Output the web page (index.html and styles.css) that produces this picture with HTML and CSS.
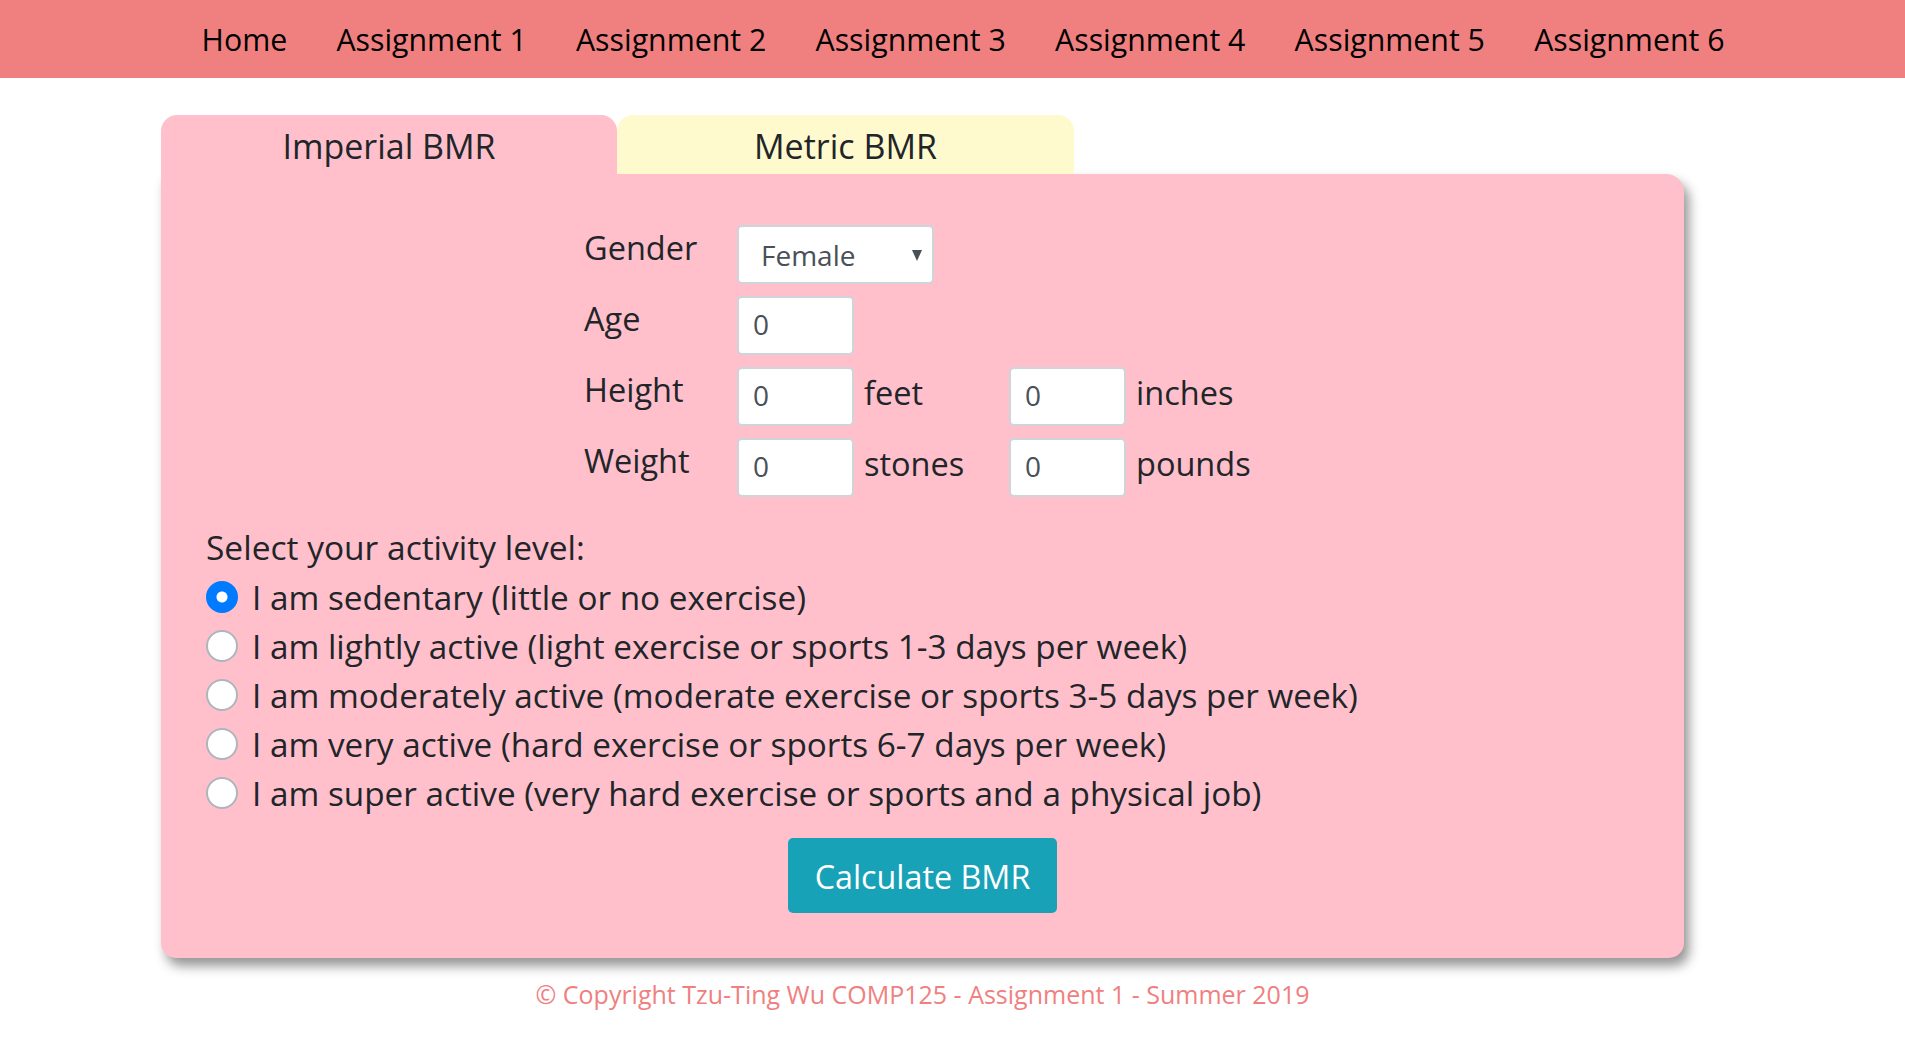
FILE: index.html
```html
<!DOCTYPE html>
<html lang="en">
<head>
<meta charset="utf-8">
<title>BMR Calculator</title>
<link rel="stylesheet" href="styles.css">
</head>
<body>
<nav class="topnav">
  <a class="nav-link" href="#">Home</a>
  <a class="nav-link" href="#">Assignment 1</a>
  <a class="nav-link" href="#">Assignment 2</a>
  <a class="nav-link" href="#">Assignment 3</a>
  <a class="nav-link" href="#">Assignment 4</a>
  <a class="nav-link" href="#">Assignment 5</a>
  <a class="nav-link" href="#">Assignment 6</a>
</nav>
<main class="page">
  <div class="tabs">
    <div class="tab tab-imperial">Imperial BMR</div>
    <div class="tab tab-metric">Metric BMR</div>
  </div>
  <section class="card">
    <div class="form-grid">
      <label class="field-label">Gender</label>
      <div class="select-wrap">
        <select class="select">
          <option>Female</option>
          <option>Male</option>
        </select>
      </div>

      <label class="field-label">Age</label>
      <input class="num-input" type="text" value="0">

      <label class="field-label">Height</label>
      <input class="num-input" type="text" value="0">
      <span class="unit">feet</span>
      <input class="num-input" type="text" value="0">
      <span class="unit">inches</span>

      <label class="field-label">Weight</label>
      <input class="num-input" type="text" value="0">
      <span class="unit">stones</span>
      <input class="num-input" type="text" value="0">
      <span class="unit">pounds</span>
    </div>

    <p class="activity-title">Select your activity level:</p>
    <div class="radios">
      <label class="radio-row"><input type="radio" name="act" class="radio" checked><span>I am sedentary (little or no exercise)</span></label>
      <label class="radio-row"><input type="radio" name="act" class="radio"><span>I am lightly active (light exercise or sports 1-3 days per week)</span></label>
      <label class="radio-row"><input type="radio" name="act" class="radio"><span>I am moderately active (moderate exercise or sports 3-5 days per week)</span></label>
      <label class="radio-row"><input type="radio" name="act" class="radio"><span>I am very active (hard exercise or sports 6-7 days per week)</span></label>
      <label class="radio-row"><input type="radio" name="act" class="radio"><span>I am super active (very hard exercise or sports and a physical job)</span></label>
    </div>
    <div class="btn-row">
      <button class="btn-calc" type="button">Calculate BMR</button>
    </div>
  </section>
  <footer class="footer">© Copyright Tzu-Ting Wu COMP125 - Assignment 1 - Summer 2019</footer>
</main>
</body>
</html>
```

FILE: styles.css
```css
html, body {
  margin: 0;
  padding: 0;
  background: #fff;
}
body {
  font-family: "Open Sans", "Noto Sans", sans-serif;
  color: #212529;
}

.topnav {
  display: flex;
  height: 78px;
  background: #f08080;
  padding-left: 177px;
  align-items: stretch;
  overflow: hidden;
}
.nav-link {
  display: block;
  padding: 0 24.6px;
  font-size: 30.3px;
  line-height: 80px;
  color: #000;
  text-decoration: none;
}

.page {
  width: 1523px;
  margin-left: 161px;
  padding-top: 37px;
}

.tabs {
  display: flex;
}
.tab {
  width: 456px;
  height: 59px;
  line-height: 62px;
  text-align: center;
  font-size: 34px;
  color: #212529;
  border-radius: 16px 16px 0 0;
}
.tab-imperial {
  background: #ffc0cb;
}
.tab-metric {
  background: #fffacd;
  width: 457px;
}

.card {
  background: #ffc0cb;
  border-radius: 0 18px 15px 15px;
  box-shadow: 5px 8px 12px rgba(0, 0, 0, 0.42);
  padding: 51px 45px 45px 45px;
}

.form-grid {
  display: grid;
  grid-template-columns: 155px 117px 155px 117px auto;
  grid-auto-rows: 59px;
  row-gap: 12px;
  margin-left: 376px;
  width: 720px;
}
.field-label {
  grid-column: 1;
  font-size: 32.5px;
  line-height: 44px;
  align-self: start;
  padding: 1px 0 0 2px;
}
.select-wrap {
  grid-column: 2 / span 2;
  width: 197px;
  position: relative;
}
.select {
  appearance: none;
  -webkit-appearance: none;
  width: 197px;
  height: 59px;
  box-sizing: border-box;
  border: 2px solid #ced4da;
  border-radius: 5px;
  background: #fff;
  font-family: inherit;
  font-size: 28px;
  color: #495057;
  padding: 0 0 0 22px;
  margin: 0;
}
.select-wrap::after {
  content: "";
  position: absolute;
  right: 12px;
  top: 25px;
  border-left: 5.5px solid transparent;
  border-right: 5.5px solid transparent;
  border-top: 11px solid #495057;
}
.num-input {
  width: 117px;
  height: 59px;
  box-sizing: border-box;
  border: 2px solid #ced4da;
  border-radius: 5px;
  background: #fff;
  font-family: inherit;
  font-size: 28px;
  color: #495057;
  padding: 0 0 3px 14px;
  margin: 0;
}
.unit {
  font-size: 32.5px;
  line-height: 51px;
  padding-left: 10px;
}

.activity-title {
  margin: 26px 0 1px 0;
  font-size: 33.5px;
  line-height: 48px;
}

.radios {
  display: flex;
  flex-direction: column;
}
.radio-row {
  display: flex;
  align-items: center;
  height: 49px;
  font-size: 33.3px;
  gap: 14px;
}
.radio {
  appearance: none;
  -webkit-appearance: none;
  width: 32px;
  height: 32px;
  margin: 0;
  border-radius: 50%;
  border: 2px solid #adb5bd;
  background: #fff;
  box-sizing: border-box;
  flex: none;
}
.radio:checked {
  border-color: #007bff;
  background: radial-gradient(circle, #fff 0 5px, #007bff 6px);
}

.btn-row {
  display: flex;
  justify-content: center;
  margin-top: 21px;
}
.btn-calc {
  width: 269px;
  height: 75px;
  background: #17a2b8;
  border: none;
  border-radius: 5px;
  color: #fff;
  font-family: inherit;
  font-size: 32.3px;
  padding: 0;
}

.footer {
  text-align: center;
  color: #f08080;
  font-size: 25px;
  line-height: 32px;
  padding-top: 20px;
}
```
